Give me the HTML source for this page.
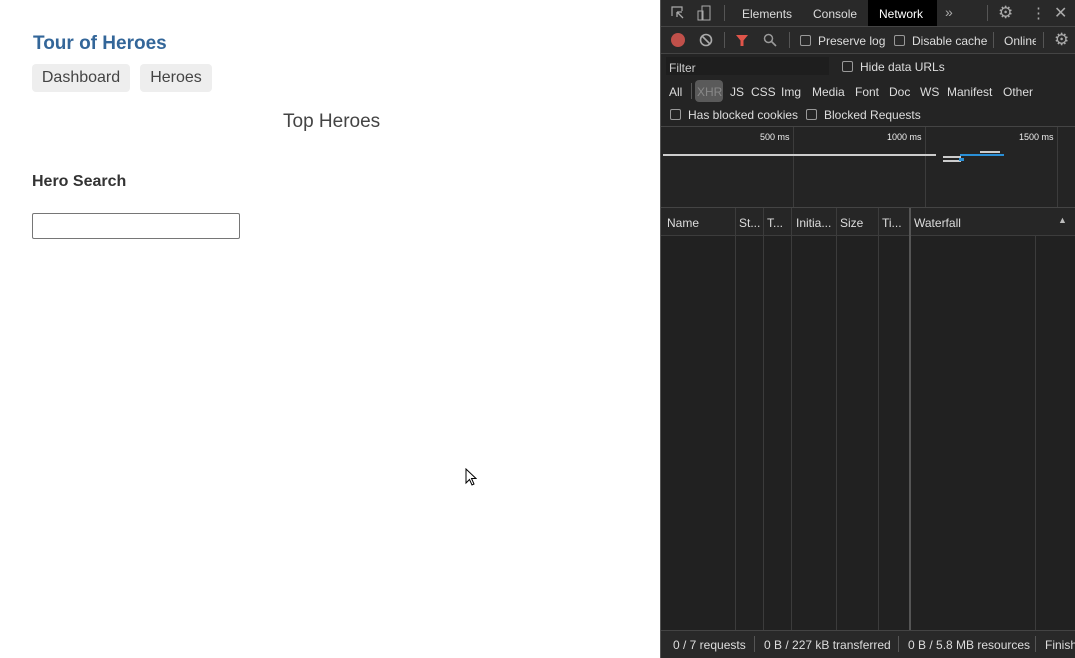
<!DOCTYPE html>
<html><head><style>
*{box-sizing:border-box;margin:0;padding:0}
body{width:1075px;height:658px;overflow:hidden;position:relative;background:#fff;font-family:"Liberation Sans",sans-serif}
.a{position:absolute}
.dt{left:660px;top:0;width:415px;height:658px;background:#242424;border-left:1px solid #555;color:#ddd;font-size:12px}
.t{position:absolute;white-space:nowrap}
.cb{position:absolute;width:11px;height:11px;border:1px solid #999;border-radius:2px}
.hl{position:absolute;left:0;width:415px;height:1px;background:#3c3c3c}
.vl{position:absolute;width:1px;background:#3c3c3c}
</style></head><body>
<div class="a" style="left:33px;top:33px;color:#336699;font-weight:bold;font-size:19px">Tour of Heroes</div>
<div class="a" style="left:32px;top:64px;width:98px;height:28px;background:#eee;border-radius:4px;color:#444;font-size:16px;line-height:28px;text-align:center">Dashboard</div>
<div class="a" style="left:140px;top:64px;width:72px;height:28px;background:#eee;border-radius:4px;color:#444;font-size:16px;line-height:28px;text-align:center">Heroes</div>
<div class="a" style="left:283px;top:111px;color:#444;font-size:19px">Top Heroes</div>
<div class="a" style="left:32px;top:173px;color:#333;font-weight:bold;font-size:16px">Hero Search</div>
<div class="a" style="left:32px;top:213px;width:208px;height:26px;border:1px solid #767676;border-radius:2px"></div>
<svg class="a" style="left:465px;top:468px" width="12" height="19" viewBox="0 0 12 19"><path d="M1 1 L1 15 L4.5 11.5 L7 17 L9 16 L6.5 10.5 L11 10.5 Z" fill="#fff" stroke="#000" stroke-width="1"/></svg>

<div class="a dt">
 <div class="a" style="left:0;top:0;width:415px;height:26px;background:#292929"></div>
 <svg class="a" style="left:10px;top:6px" width="14" height="14"><path d="M1 10V1h10v4" fill="none" stroke="#aaa" stroke-width="1.2"/><path d="M6 6l6 6M6 6v5M6 6h5" stroke="#aaa" stroke-width="1.3" fill="none"/></svg>
 <svg class="a" style="left:36px;top:5px" width="14" height="16"><rect x="5" y="1" width="8" height="14" fill="none" stroke="#aaa"/><rect x="1" y="6" width="5" height="9" fill="none" stroke="#aaa"/></svg>
 <div class="vl" style="left:63px;top:5px;height:16px;background:#555"></div>
 <div class="t" style="left:81px;top:7px">Elements</div>
 <div class="t" style="left:152px;top:7px">Console</div>
 <div class="a" style="left:207px;top:0;width:69px;height:26px;background:#000"></div>
 <div class="t" style="left:218px;top:7px;color:#fff">Network</div>
 <div class="t" style="left:284px;top:4px;font-size:14px;color:#aaa">»</div>
 <div class="vl" style="left:326px;top:5px;height:16px;background:#555"></div>
 <div class="t" style="left:337px;top:3px;font-size:17px;color:#aaa">⚙</div>
 <div class="t" style="left:370px;top:4px;font-size:15px;color:#aaa">⋮</div>
 <div class="t" style="left:393px;top:3px;font-size:16px;color:#aaa">✕</div>
 <div class="hl" style="top:26px;background:#444"></div>
 <div class="a" style="left:0;top:27px;width:415px;height:26px;background:#292929"></div>
 <div class="a" style="left:10px;top:33px;width:14px;height:14px;border-radius:50%;background:#c0504a"></div>
 <svg class="a" style="left:38px;top:33px" width="14" height="14"><circle cx="7" cy="7" r="5.5" fill="none" stroke="#aaa" stroke-width="1.6"/><path d="M3 3l8 8" stroke="#aaa" stroke-width="1.6"/></svg>
 <div class="vl" style="left:63px;top:32px;height:16px;background:#555"></div>
 <svg class="a" style="left:74px;top:34px" width="14" height="13"><path d="M1 1h12L8.5 6.5V12h-3V6.5z" fill="#e0554a"/></svg>
 <svg class="a" style="left:102px;top:33px" width="14" height="14"><circle cx="5.5" cy="5.5" r="4" fill="none" stroke="#999" stroke-width="1.5"/><path d="M8.5 8.5l4.5 4.5" stroke="#999" stroke-width="1.6"/></svg>
 <div class="vl" style="left:128px;top:32px;height:16px;background:#555"></div>
 <div class="cb" style="left:139px;top:35px"></div><div class="t" style="left:157px;top:34px">Preserve log</div>
 <div class="cb" style="left:233px;top:35px"></div><div class="t" style="left:251px;top:34px">Disable cache</div>
 <div class="vl" style="left:332px;top:32px;height:16px;background:#555"></div>
 <div class="t" style="left:343px;top:34px;width:32px;overflow:hidden">Online</div>
 <div class="vl" style="left:382px;top:32px;height:16px;background:#555"></div>
 <div class="t" style="left:393px;top:30px;font-size:17px;color:#aaa">⚙</div>
 <div class="hl" style="top:53px;background:#444"></div>
 <div class="a" style="left:5px;top:57px;width:163px;height:18px;background:#1e1e1e"></div>
 <div class="t" style="left:8px;top:61px;color:#ccc">Filter</div>
 <div class="cb" style="left:181px;top:61px"></div><div class="t" style="left:199px;top:60px">Hide data URLs</div>
 <div class="t" style="left:8px;top:85px">All</div>
 <div class="vl" style="left:30px;top:83px;height:16px;background:#555"></div>
 <div class="a" style="left:34px;top:80px;width:28px;height:22px;background:#5a5a5a;border-radius:4px"></div>
 <div class="t" style="left:36px;top:85px;color:#888">XHR</div>
 <div class="t" style="left:69px;top:85px">JS</div>
 <div class="t" style="left:90px;top:85px">CSS</div>
 <div class="t" style="left:120px;top:85px">Img</div>
 <div class="t" style="left:151px;top:85px">Media</div>
 <div class="t" style="left:194px;top:85px">Font</div>
 <div class="t" style="left:228px;top:85px">Doc</div>
 <div class="t" style="left:259px;top:85px">WS</div>
 <div class="t" style="left:286px;top:85px">Manifest</div>
 <div class="t" style="left:342px;top:85px">Other</div>
 <div class="cb" style="left:9px;top:109px"></div><div class="t" style="left:27px;top:108px">Has blocked cookies</div>
 <div class="cb" style="left:145px;top:109px"></div><div class="t" style="left:163px;top:108px">Blocked Requests</div>
 <div class="hl" style="top:126px;background:#444"></div>
 <div class="vl" style="left:132px;top:127px;height:80px"></div>
 <div class="vl" style="left:264px;top:127px;height:80px"></div>
 <div class="vl" style="left:396px;top:127px;height:80px"></div>
 <div class="t" style="left:99px;top:132px;font-size:9px;color:#eee">500 ms</div>
 <div class="t" style="left:226px;top:132px;font-size:9px;color:#eee">1000 ms</div>
 <div class="t" style="left:358px;top:132px;font-size:9px;color:#eee">1500 ms</div>
 <div class="a" style="left:2px;top:154px;width:273px;height:2px;background:#ccc"></div>
 <div class="a" style="left:282px;top:156px;width:18px;height:2px;background:#ccc"></div>
 <div class="a" style="left:282px;top:160px;width:18px;height:2px;background:#ccc"></div>
 <div class="a" style="left:299px;top:154px;width:44px;height:2px;background:#2a8fd6"></div>
 <div class="a" style="left:319px;top:151px;width:20px;height:2px;background:#ccc"></div>
 <div class="a" style="left:298px;top:158px;width:5px;height:3px;background:#2a8fd6"></div>
 <div class="hl" style="top:207px;background:#444"></div>
 <div class="a" style="left:0;top:208px;width:415px;height:27px;background:#262626"></div>
 <div class="t" style="left:6px;top:216px">Name</div>
 <div class="t" style="left:78px;top:216px">St...</div>
 <div class="t" style="left:106px;top:216px">T...</div>
 <div class="t" style="left:135px;top:216px">Initia...</div>
 <div class="t" style="left:179px;top:216px">Size</div>
 <div class="t" style="left:221px;top:216px">Ti...</div>
 <div class="t" style="left:253px;top:216px">Waterfall</div>
 <div class="t" style="left:397px;top:215px;font-size:9px;color:#bbb">▲</div>
 <div class="hl" style="top:235px"></div>
 <div class="a" style="left:0;top:236px;width:415px;height:394px;background:#212121"></div>
 <div class="vl" style="left:74px;top:208px;height:422px"></div>
 <div class="vl" style="left:102px;top:208px;height:422px"></div>
 <div class="vl" style="left:130px;top:208px;height:422px"></div>
 <div class="vl" style="left:175px;top:208px;height:422px"></div>
 <div class="vl" style="left:217px;top:208px;height:422px"></div>
 <div class="vl" style="left:248px;top:208px;height:422px;width:2px;background:#555"></div>
 <div class="vl" style="left:374px;top:236px;height:394px"></div>
 <div class="hl" style="top:630px;background:#444"></div>
 <div class="a" style="left:0;top:631px;width:415px;height:27px;background:#292929"></div>
 <div class="t" style="left:12px;top:638px">0 / 7 requests</div>
 <div class="vl" style="left:93px;top:636px;height:16px;background:#555"></div>
 <div class="t" style="left:103px;top:638px">0 B / 227 kB transferred</div>
 <div class="vl" style="left:237px;top:636px;height:16px;background:#555"></div>
 <div class="t" style="left:247px;top:638px">0 B / 5.8 MB resources</div>
 <div class="vl" style="left:374px;top:636px;height:16px;background:#555"></div>
 <div class="t" style="left:384px;top:638px">Finish</div>
</div>
</body></html>
